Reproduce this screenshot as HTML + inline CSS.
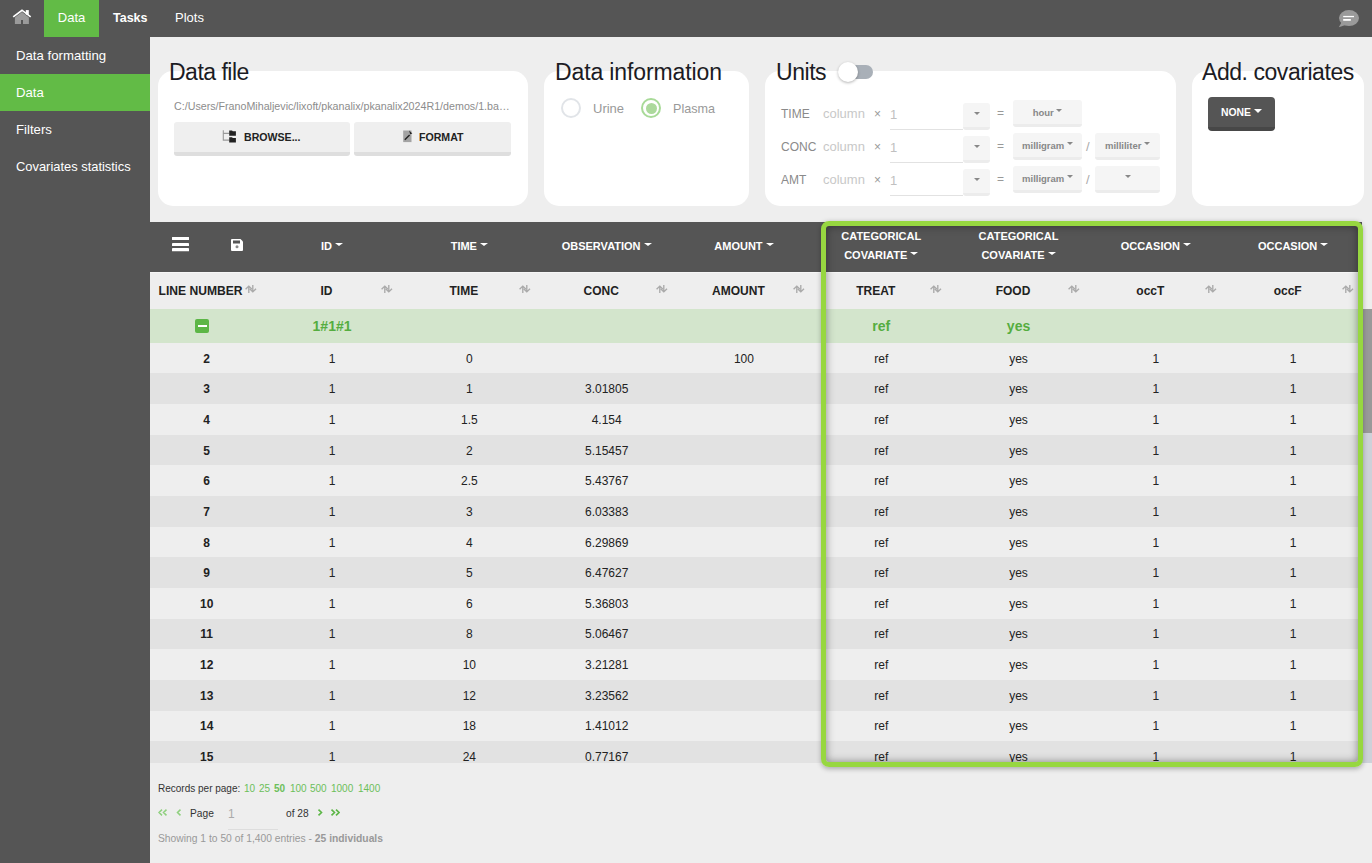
<!DOCTYPE html>
<html><head><meta charset="utf-8"><style>
*{box-sizing:border-box;margin:0;padding:0}
html,body{width:1372px;height:863px;overflow:hidden;background:#eee;font-family:"Liberation Sans",sans-serif}
.a{position:absolute;white-space:nowrap}
#top{position:absolute;left:0;top:0;width:1372px;height:37px;background:#555555}
#side{position:absolute;left:0;top:37px;width:150px;height:826px;background:#555555}
.nav{position:absolute;top:0;height:37px;line-height:36px;color:#fff;font-size:13px;white-space:nowrap}
.sitem{position:absolute;left:0;width:150px;height:37px;line-height:37px;padding-left:16px;color:#fff;font-size:13.2px;white-space:nowrap}
.card{position:absolute;top:71px;height:135px;background:#fff;border-radius:15px}
.ttl{position:absolute;top:58px;font-size:23px;line-height:28px;color:#1c1c24;white-space:nowrap}
.btn{position:absolute;background:#efefef;border-bottom:4px solid #dedede;border-radius:3px;font-weight:bold;color:#222;text-align:center;white-space:nowrap}
.caret{display:inline-block;width:0;height:0;vertical-align:middle;position:relative;top:-2.5px}
.lbl{position:absolute;font-size:12.5px;color:#999;white-space:nowrap}
.ubtn{position:absolute;background:#f5f5f5;border-bottom:3px solid #ececec;border-radius:3px;font-weight:bold;font-size:9.5px;color:#888;text-align:center;white-space:nowrap}
#tbl{position:absolute;left:150px;top:222px;width:1212px;height:541px;overflow:hidden;background:#eee}
.hc{position:absolute;top:0;height:50px;color:#fff;font-weight:bold;font-size:11px;text-align:center;display:flex;flex-direction:column;align-items:center;justify-content:center;white-space:nowrap;line-height:18.5px;padding-bottom:3px}
.sc{position:absolute;top:50px;height:37px;color:#222;font-weight:bold;font-size:12px;display:flex;align-items:center;justify-content:center;white-space:nowrap;padding-right:11px}
.row{position:absolute;left:0;width:1212px}
.c{position:absolute;top:0;height:100%;padding-top:1px;font-size:12px;color:#222;display:flex;align-items:center;justify-content:center;white-space:nowrap}
.sort{position:absolute;top:62.5px;width:12px;height:8px}
</style></head><body>
<div id="top">
<svg class="a" style="left:12px;top:8px" width="20" height="18" viewBox="0 0 20 18">
<path d="M2.9 9.6 L10 3.9 L16.9 9.6 V16 H11 V12 H9 V16 H2.9 Z" fill="#9a9a9a"/>
<rect x="13.8" y="2.1" width="3" height="4.6" fill="#fff"/>
<path d="M1.2 8.9 L10 2.2 L18.7 8.9" stroke="#fff" stroke-width="1.7" fill="none"/>
</svg>
<div class="nav" style="left:44px;width:55px;background:#62bb46;text-align:center;font-size:13px">Data</div>
<div class="nav" style="left:113px;font-weight:bold;font-size:12.5px">Tasks</div>
<div class="nav" style="left:175px;font-size:13px">Plots</div>
<svg class="a" style="left:1338px;top:9px" width="22" height="19" viewBox="0 0 22 19">
<ellipse cx="11" cy="9.1" rx="10" ry="8" fill="#9a9a9a"/>
<path d="M3.5 13.5 L0.8 18.2 L7.5 16 Z" fill="#9a9a9a"/>
<rect x="5.2" y="6.9" width="10.8" height="1.3" fill="#fff"/>
<rect x="5.2" y="10" width="7.6" height="1.8" fill="#fff"/>
</svg>
</div>
<div id="side">
<div class="sitem" style="top:0">Data formatting</div>
<div class="sitem" style="top:37px;background:#62bb46">Data</div>
<div class="sitem" style="top:74px">Filters</div>
<div class="sitem" style="top:111px;font-size:12.9px">Covariates statistics</div>
</div>
<div class="card" style="left:158px;width:370px"></div>
<div class="card" style="left:544px;width:205px"></div>
<div class="card" style="left:765px;width:411px"></div>
<div class="card" style="left:1192px;width:172px"></div>
<div class="ttl" style="left:169px;letter-spacing:-0.5px">Data file</div>
<div class="ttl" style="left:555px;letter-spacing:-0.12px">Data information</div>
<div class="ttl" style="left:776px;letter-spacing:-0.45px">Units</div>
<div class="ttl" style="left:1202px;letter-spacing:-0.45px">Add. covariates</div>
<div class="a" style="left:174px;top:98.5px;font-size:10.7px;color:#8c8c8c;line-height:14px">C:/Users/FranoMihaljevic/lixoft/pkanalix/pkanalix2024R1/demos/1.ba…</div>
<div class="btn" style="left:174px;top:122px;width:176px;height:34px;font-size:10.6px;line-height:30px">
<svg style="position:absolute;left:48px;top:8px" width="15" height="14" viewBox="0 0 15 14">
<path d="M1.3 0.2 V10.1 H7.2 M1.3 3.4 H7.2" stroke="#999" stroke-width="1.1" fill="none"/>
<path d="M7.2 0.4 H10 L10.8 1.2 H13.9 V5.7 H7.2 Z" fill="#222"/><path d="M7.2 7.2 H10 L10.8 8 H13.9 V12.4 H7.2 Z" fill="#222"/>
</svg><span style="position:absolute;left:70px;top:0">BROWSE...</span></div>
<div class="btn" style="left:354px;top:122px;width:157px;height:34px;font-size:10.6px;line-height:30px">
<svg style="position:absolute;left:48.5px;top:7.8px" width="11" height="13" viewBox="0 0 11 13">
<rect x="0.2" y="0.5" width="8.3" height="11.6" fill="#a3a3a3"/><path d="M1.8 9.8 L6.6 5" stroke="#222" stroke-width="1.4"/><path d="M6 0.6 L9.3 3.5 L7.2 4.3 Z" fill="#222"/>
</svg><span style="position:absolute;left:65px;top:0">FORMAT</span></div>
<div class="a" style="left:561px;top:98px;width:20px;height:20px;border:2px solid #e1e4e8;border-radius:50%"></div>
<div class="a" style="left:593px;top:100.5px;font-size:13px;color:#999;line-height:16px">Urine</div>
<div class="a" style="left:641px;top:98px;width:20px;height:20px;border:2px solid #a8da98;border-radius:50%;background:#fff"></div>
<div class="a" style="left:645.5px;top:102.5px;width:11px;height:11px;border-radius:50%;background:#acd99c"></div>
<div class="a" style="left:673px;top:100.5px;font-size:12.6px;color:#999;line-height:16px">Plasma</div>
<div class="a" style="left:847px;top:65px;width:26px;height:14px;border-radius:7px;background:#a9b0b8"></div>
<div class="a" style="left:838px;top:62px;width:20px;height:20px;border-radius:50%;background:#fff;box-shadow:0 1px 3px rgba(0,0,0,.3)"></div>
<div class="a" style="left:781px;top:105.5px;font-size:12px;color:#8a8a8a;line-height:16px">TIME</div>
<div class="a" style="left:823px;top:105.5px;font-size:13px;color:#c8c8c8;line-height:16px">column</div>
<div class="a" style="left:874px;top:105.5px;font-size:12px;color:#9a9a9a;line-height:16px">×</div>
<div class="a" style="left:890px;top:107px;font-size:13px;color:#c0c0c0;line-height:16px">1</div>
<div class="a" style="left:890px;top:129px;width:73px;height:1px;background:#e2e2e2"></div>
<div class="ubtn" style="left:963px;top:103px;width:27px;height:27px;line-height:26px"><span class="caret" style="border-left:3.5px solid transparent;border-right:3.5px solid transparent;border-top:3.5px solid #888"></span></div>
<div class="a" style="left:997px;top:105px;font-size:12px;color:#999;line-height:16px">=</div>
<div class="ubtn" style="left:1013px;top:100px;width:69px;height:27px;line-height:25px">hour <span class="caret" style="border-left:3.5px solid transparent;border-right:3.5px solid transparent;border-top:3.5px solid #888"></span></div>
<div class="a" style="left:781px;top:138.5px;font-size:12px;color:#8a8a8a;line-height:16px">CONC</div>
<div class="a" style="left:823px;top:138.5px;font-size:13px;color:#c8c8c8;line-height:16px">column</div>
<div class="a" style="left:874px;top:138.5px;font-size:12px;color:#9a9a9a;line-height:16px">×</div>
<div class="a" style="left:890px;top:140px;font-size:13px;color:#c0c0c0;line-height:16px">1</div>
<div class="a" style="left:890px;top:162px;width:73px;height:1px;background:#e2e2e2"></div>
<div class="ubtn" style="left:963px;top:136px;width:27px;height:27px;line-height:26px"><span class="caret" style="border-left:3.5px solid transparent;border-right:3.5px solid transparent;border-top:3.5px solid #888"></span></div>
<div class="a" style="left:997px;top:138px;font-size:12px;color:#999;line-height:16px">=</div>
<div class="ubtn" style="left:1013px;top:133px;width:69px;height:27px;line-height:25px">milligram <span class="caret" style="border-left:3.5px solid transparent;border-right:3.5px solid transparent;border-top:3.5px solid #888"></span></div>
<div class="a" style="left:1086px;top:139px;font-size:13px;color:#aaa;line-height:16px">/</div>
<div class="ubtn" style="left:1095px;top:133px;width:65px;height:27px;line-height:25px">milliliter <span class="caret" style="border-left:3.5px solid transparent;border-right:3.5px solid transparent;border-top:3.5px solid #888"></span></div>
<div class="a" style="left:781px;top:171.5px;font-size:12px;color:#8a8a8a;line-height:16px">AMT</div>
<div class="a" style="left:823px;top:171.5px;font-size:13px;color:#c8c8c8;line-height:16px">column</div>
<div class="a" style="left:874px;top:171.5px;font-size:12px;color:#9a9a9a;line-height:16px">×</div>
<div class="a" style="left:890px;top:173px;font-size:13px;color:#c0c0c0;line-height:16px">1</div>
<div class="a" style="left:890px;top:195px;width:73px;height:1px;background:#e2e2e2"></div>
<div class="ubtn" style="left:963px;top:169px;width:27px;height:27px;line-height:26px"><span class="caret" style="border-left:3.5px solid transparent;border-right:3.5px solid transparent;border-top:3.5px solid #888"></span></div>
<div class="a" style="left:997px;top:171px;font-size:12px;color:#999;line-height:16px">=</div>
<div class="ubtn" style="left:1013px;top:166px;width:69px;height:27px;line-height:25px">milligram <span class="caret" style="border-left:3.5px solid transparent;border-right:3.5px solid transparent;border-top:3.5px solid #888"></span></div>
<div class="a" style="left:1086px;top:172px;font-size:13px;color:#aaa;line-height:16px">/</div>
<div class="ubtn" style="left:1095px;top:166px;width:65px;height:27px;line-height:25px"> <span class="caret" style="border-left:3.5px solid transparent;border-right:3.5px solid transparent;border-top:3.5px solid #888"></span></div>
<div class="a" style="left:1208px;top:97px;width:67px;height:34px;background:#555;border-bottom:4px solid #474747;border-radius:4px;color:#fff;font-weight:bold;font-size:10.4px;line-height:31px;text-align:center">NONE <span class="caret" style="border-left:4.0px solid transparent;border-right:4.0px solid transparent;border-top:4px solid #fff"></span></div>
<div id="tbl">
<div class="a" style="left:0;top:0;width:1212px;height:50px;background:#555555"></div>
<div class="a" style="left:0;top:50px;width:1212px;height:1px;background:#f6f6f6"></div>
<svg class="a" style="left:22px;top:14px" width="17" height="16" viewBox="0 0 17 16">
<rect x="0" y="0.9" width="17" height="3.2" rx="0.4" fill="#fff"/><rect x="0" y="7.0" width="17" height="3.1" rx="0.4" fill="#fff"/><rect x="0" y="12.1" width="17" height="3.2" rx="0.4" fill="#fff"/>
</svg>
<svg class="a" style="left:81px;top:17px" width="12" height="12" viewBox="0 0 12 12">
<path d="M0 1 Q0 0 1 0 H9.5 L12 2.5 V11 Q12 12 11 12 H1 Q0 12 0 11 Z" fill="#fff"/>
<rect x="2" y="1.5" width="7" height="3" fill="#555"/><circle cx="6" cy="7.8" r="1.5" fill="#888"/>
</svg>
<div class="hc" style="left:113.40px;width:137.30px;padding-bottom:1.5px"><div>ID <span class="caret" style="border-left:4.0px solid transparent;border-right:4.0px solid transparent;border-top:3.5px solid #fff"></span></div></div>
<div class="hc" style="left:250.70px;width:137.30px;padding-bottom:1.5px"><div>TIME <span class="caret" style="border-left:4.0px solid transparent;border-right:4.0px solid transparent;border-top:3.5px solid #fff"></span></div></div>
<div class="hc" style="left:388.00px;width:137.30px;padding-bottom:1.5px"><div>OBSERVATION <span class="caret" style="border-left:4.0px solid transparent;border-right:4.0px solid transparent;border-top:3.5px solid #fff"></span></div></div>
<div class="hc" style="left:525.30px;width:137.30px;padding-bottom:1.5px"><div>AMOUNT <span class="caret" style="border-left:4.0px solid transparent;border-right:4.0px solid transparent;border-top:3.5px solid #fff"></span></div></div>
<div class="hc" style="left:662.60px;width:137.30px"><div>CATEGORICAL</div><div>COVARIATE <span class="caret" style="border-left:4.0px solid transparent;border-right:4.0px solid transparent;border-top:3.5px solid #fff"></span></div></div>
<div class="hc" style="left:799.90px;width:137.30px"><div>CATEGORICAL</div><div>COVARIATE <span class="caret" style="border-left:4.0px solid transparent;border-right:4.0px solid transparent;border-top:3.5px solid #fff"></span></div></div>
<div class="hc" style="left:937.20px;width:137.30px;padding-bottom:1.5px"><div>OCCASION <span class="caret" style="border-left:4.0px solid transparent;border-right:4.0px solid transparent;border-top:3.5px solid #fff"></span></div></div>
<div class="hc" style="left:1074.50px;width:137.30px;padding-bottom:1.5px"><div>OCCASION <span class="caret" style="border-left:4.0px solid transparent;border-right:4.0px solid transparent;border-top:3.5px solid #fff"></span></div></div>
<div class="a" style="left:8.5px;top:61px;font-weight:bold;font-size:12.1px;color:#222;line-height:16px">LINE NUMBER</div>
<svg class="sort" style="left:94.50px" width="12" height="8" viewBox="0 0 12 8"><path d="M3.8 8 V1.2 M0.6 4.3 L3.8 1.1 L7 4.3" stroke="#aaa" stroke-width="1.35" fill="none"/><path d="M7.8 0 V6.8 M4.6 3.7 L7.8 6.9 L11 3.7" stroke="#aaa" stroke-width="1.35" fill="none"/></svg>
<div class="sc" style="left:113.40px;width:137.30px">ID</div>
<svg class="sort" style="left:231.20px" width="12" height="8" viewBox="0 0 12 8"><path d="M3.8 8 V1.2 M0.6 4.3 L3.8 1.1 L7 4.3" stroke="#aaa" stroke-width="1.35" fill="none"/><path d="M7.8 0 V6.8 M4.6 3.7 L7.8 6.9 L11 3.7" stroke="#aaa" stroke-width="1.35" fill="none"/></svg>
<div class="sc" style="left:250.70px;width:137.30px">TIME</div>
<svg class="sort" style="left:368.50px" width="12" height="8" viewBox="0 0 12 8"><path d="M3.8 8 V1.2 M0.6 4.3 L3.8 1.1 L7 4.3" stroke="#aaa" stroke-width="1.35" fill="none"/><path d="M7.8 0 V6.8 M4.6 3.7 L7.8 6.9 L11 3.7" stroke="#aaa" stroke-width="1.35" fill="none"/></svg>
<div class="sc" style="left:388.00px;width:137.30px">CONC</div>
<svg class="sort" style="left:505.80px" width="12" height="8" viewBox="0 0 12 8"><path d="M3.8 8 V1.2 M0.6 4.3 L3.8 1.1 L7 4.3" stroke="#aaa" stroke-width="1.35" fill="none"/><path d="M7.8 0 V6.8 M4.6 3.7 L7.8 6.9 L11 3.7" stroke="#aaa" stroke-width="1.35" fill="none"/></svg>
<div class="sc" style="left:525.30px;width:137.30px">AMOUNT</div>
<svg class="sort" style="left:643.10px" width="12" height="8" viewBox="0 0 12 8"><path d="M3.8 8 V1.2 M0.6 4.3 L3.8 1.1 L7 4.3" stroke="#aaa" stroke-width="1.35" fill="none"/><path d="M7.8 0 V6.8 M4.6 3.7 L7.8 6.9 L11 3.7" stroke="#aaa" stroke-width="1.35" fill="none"/></svg>
<div class="sc" style="left:662.60px;width:137.30px">TREAT</div>
<svg class="sort" style="left:780.40px" width="12" height="8" viewBox="0 0 12 8"><path d="M3.8 8 V1.2 M0.6 4.3 L3.8 1.1 L7 4.3" stroke="#aaa" stroke-width="1.35" fill="none"/><path d="M7.8 0 V6.8 M4.6 3.7 L7.8 6.9 L11 3.7" stroke="#aaa" stroke-width="1.35" fill="none"/></svg>
<div class="sc" style="left:799.90px;width:137.30px">FOOD</div>
<svg class="sort" style="left:917.70px" width="12" height="8" viewBox="0 0 12 8"><path d="M3.8 8 V1.2 M0.6 4.3 L3.8 1.1 L7 4.3" stroke="#aaa" stroke-width="1.35" fill="none"/><path d="M7.8 0 V6.8 M4.6 3.7 L7.8 6.9 L11 3.7" stroke="#aaa" stroke-width="1.35" fill="none"/></svg>
<div class="sc" style="left:937.20px;width:137.30px">occT</div>
<svg class="sort" style="left:1055.00px" width="12" height="8" viewBox="0 0 12 8"><path d="M3.8 8 V1.2 M0.6 4.3 L3.8 1.1 L7 4.3" stroke="#aaa" stroke-width="1.35" fill="none"/><path d="M7.8 0 V6.8 M4.6 3.7 L7.8 6.9 L11 3.7" stroke="#aaa" stroke-width="1.35" fill="none"/></svg>
<div class="sc" style="left:1074.50px;width:137.30px">occF</div>
<svg class="sort" style="left:1192.30px" width="12" height="8" viewBox="0 0 12 8"><path d="M3.8 8 V1.2 M0.6 4.3 L3.8 1.1 L7 4.3" stroke="#aaa" stroke-width="1.35" fill="none"/><path d="M7.8 0 V6.8 M4.6 3.7 L7.8 6.9 L11 3.7" stroke="#aaa" stroke-width="1.35" fill="none"/></svg>
<div class="row" style="top:87px;height:33.8px;background:#d3e5cc">
<div class="a" style="left:45px;top:10px;width:14px;height:14px;background:#5cb646;border-radius:2px"><div class="a" style="left:2.5px;top:5.8px;width:9px;height:2.4px;background:#fff"></div></div>
<div class="c" style="left:113.40px;width:137.30px;color:#55ad40;font-weight:bold;font-size:14px">1#1#1</div>
<div class="c" style="left:662.60px;width:137.30px;color:#55ad40;font-weight:bold;font-size:14px">ref</div>
<div class="c" style="left:799.90px;width:137.30px;color:#55ad40;font-weight:bold;font-size:14px">yes</div>
</div>
<div class="row" style="top:120.80px;height:30.65px;background:#eeeeee">
<div class="c" style="left:0.00px;width:113.40px;font-weight:bold;">2</div>
<div class="c" style="left:113.40px;width:137.30px;">1</div>
<div class="c" style="left:250.70px;width:137.30px;">0</div>
<div class="c" style="left:525.30px;width:137.30px;">100</div>
<div class="c" style="left:662.60px;width:137.30px;">ref</div>
<div class="c" style="left:799.90px;width:137.30px;">yes</div>
<div class="c" style="left:937.20px;width:137.30px;">1</div>
<div class="c" style="left:1074.50px;width:137.30px;">1</div>
</div>
<div class="row" style="top:151.45px;height:30.65px;background:#e2e2e2">
<div class="c" style="left:0.00px;width:113.40px;font-weight:bold;">3</div>
<div class="c" style="left:113.40px;width:137.30px;">1</div>
<div class="c" style="left:250.70px;width:137.30px;">1</div>
<div class="c" style="left:388.00px;width:137.30px;">3.01805</div>
<div class="c" style="left:662.60px;width:137.30px;">ref</div>
<div class="c" style="left:799.90px;width:137.30px;">yes</div>
<div class="c" style="left:937.20px;width:137.30px;">1</div>
<div class="c" style="left:1074.50px;width:137.30px;">1</div>
</div>
<div class="row" style="top:182.10px;height:30.65px;background:#eeeeee">
<div class="c" style="left:0.00px;width:113.40px;font-weight:bold;">4</div>
<div class="c" style="left:113.40px;width:137.30px;">1</div>
<div class="c" style="left:250.70px;width:137.30px;">1.5</div>
<div class="c" style="left:388.00px;width:137.30px;">4.154</div>
<div class="c" style="left:662.60px;width:137.30px;">ref</div>
<div class="c" style="left:799.90px;width:137.30px;">yes</div>
<div class="c" style="left:937.20px;width:137.30px;">1</div>
<div class="c" style="left:1074.50px;width:137.30px;">1</div>
</div>
<div class="row" style="top:212.75px;height:30.65px;background:#e2e2e2">
<div class="c" style="left:0.00px;width:113.40px;font-weight:bold;">5</div>
<div class="c" style="left:113.40px;width:137.30px;">1</div>
<div class="c" style="left:250.70px;width:137.30px;">2</div>
<div class="c" style="left:388.00px;width:137.30px;">5.15457</div>
<div class="c" style="left:662.60px;width:137.30px;">ref</div>
<div class="c" style="left:799.90px;width:137.30px;">yes</div>
<div class="c" style="left:937.20px;width:137.30px;">1</div>
<div class="c" style="left:1074.50px;width:137.30px;">1</div>
</div>
<div class="row" style="top:243.40px;height:30.65px;background:#eeeeee">
<div class="c" style="left:0.00px;width:113.40px;font-weight:bold;">6</div>
<div class="c" style="left:113.40px;width:137.30px;">1</div>
<div class="c" style="left:250.70px;width:137.30px;">2.5</div>
<div class="c" style="left:388.00px;width:137.30px;">5.43767</div>
<div class="c" style="left:662.60px;width:137.30px;">ref</div>
<div class="c" style="left:799.90px;width:137.30px;">yes</div>
<div class="c" style="left:937.20px;width:137.30px;">1</div>
<div class="c" style="left:1074.50px;width:137.30px;">1</div>
</div>
<div class="row" style="top:274.05px;height:30.65px;background:#e2e2e2">
<div class="c" style="left:0.00px;width:113.40px;font-weight:bold;">7</div>
<div class="c" style="left:113.40px;width:137.30px;">1</div>
<div class="c" style="left:250.70px;width:137.30px;">3</div>
<div class="c" style="left:388.00px;width:137.30px;">6.03383</div>
<div class="c" style="left:662.60px;width:137.30px;">ref</div>
<div class="c" style="left:799.90px;width:137.30px;">yes</div>
<div class="c" style="left:937.20px;width:137.30px;">1</div>
<div class="c" style="left:1074.50px;width:137.30px;">1</div>
</div>
<div class="row" style="top:304.70px;height:30.65px;background:#eeeeee">
<div class="c" style="left:0.00px;width:113.40px;font-weight:bold;">8</div>
<div class="c" style="left:113.40px;width:137.30px;">1</div>
<div class="c" style="left:250.70px;width:137.30px;">4</div>
<div class="c" style="left:388.00px;width:137.30px;">6.29869</div>
<div class="c" style="left:662.60px;width:137.30px;">ref</div>
<div class="c" style="left:799.90px;width:137.30px;">yes</div>
<div class="c" style="left:937.20px;width:137.30px;">1</div>
<div class="c" style="left:1074.50px;width:137.30px;">1</div>
</div>
<div class="row" style="top:335.35px;height:30.65px;background:#e2e2e2">
<div class="c" style="left:0.00px;width:113.40px;font-weight:bold;">9</div>
<div class="c" style="left:113.40px;width:137.30px;">1</div>
<div class="c" style="left:250.70px;width:137.30px;">5</div>
<div class="c" style="left:388.00px;width:137.30px;">6.47627</div>
<div class="c" style="left:662.60px;width:137.30px;">ref</div>
<div class="c" style="left:799.90px;width:137.30px;">yes</div>
<div class="c" style="left:937.20px;width:137.30px;">1</div>
<div class="c" style="left:1074.50px;width:137.30px;">1</div>
</div>
<div class="row" style="top:366.00px;height:30.65px;background:#eeeeee">
<div class="c" style="left:0.00px;width:113.40px;font-weight:bold;">10</div>
<div class="c" style="left:113.40px;width:137.30px;">1</div>
<div class="c" style="left:250.70px;width:137.30px;">6</div>
<div class="c" style="left:388.00px;width:137.30px;">5.36803</div>
<div class="c" style="left:662.60px;width:137.30px;">ref</div>
<div class="c" style="left:799.90px;width:137.30px;">yes</div>
<div class="c" style="left:937.20px;width:137.30px;">1</div>
<div class="c" style="left:1074.50px;width:137.30px;">1</div>
</div>
<div class="row" style="top:396.65px;height:30.65px;background:#e2e2e2">
<div class="c" style="left:0.00px;width:113.40px;font-weight:bold;">11</div>
<div class="c" style="left:113.40px;width:137.30px;">1</div>
<div class="c" style="left:250.70px;width:137.30px;">8</div>
<div class="c" style="left:388.00px;width:137.30px;">5.06467</div>
<div class="c" style="left:662.60px;width:137.30px;">ref</div>
<div class="c" style="left:799.90px;width:137.30px;">yes</div>
<div class="c" style="left:937.20px;width:137.30px;">1</div>
<div class="c" style="left:1074.50px;width:137.30px;">1</div>
</div>
<div class="row" style="top:427.30px;height:30.65px;background:#eeeeee">
<div class="c" style="left:0.00px;width:113.40px;font-weight:bold;">12</div>
<div class="c" style="left:113.40px;width:137.30px;">1</div>
<div class="c" style="left:250.70px;width:137.30px;">10</div>
<div class="c" style="left:388.00px;width:137.30px;">3.21281</div>
<div class="c" style="left:662.60px;width:137.30px;">ref</div>
<div class="c" style="left:799.90px;width:137.30px;">yes</div>
<div class="c" style="left:937.20px;width:137.30px;">1</div>
<div class="c" style="left:1074.50px;width:137.30px;">1</div>
</div>
<div class="row" style="top:457.95px;height:30.65px;background:#e2e2e2">
<div class="c" style="left:0.00px;width:113.40px;font-weight:bold;">13</div>
<div class="c" style="left:113.40px;width:137.30px;">1</div>
<div class="c" style="left:250.70px;width:137.30px;">12</div>
<div class="c" style="left:388.00px;width:137.30px;">3.23562</div>
<div class="c" style="left:662.60px;width:137.30px;">ref</div>
<div class="c" style="left:799.90px;width:137.30px;">yes</div>
<div class="c" style="left:937.20px;width:137.30px;">1</div>
<div class="c" style="left:1074.50px;width:137.30px;">1</div>
</div>
<div class="row" style="top:488.60px;height:30.65px;background:#eeeeee">
<div class="c" style="left:0.00px;width:113.40px;font-weight:bold;">14</div>
<div class="c" style="left:113.40px;width:137.30px;">1</div>
<div class="c" style="left:250.70px;width:137.30px;">18</div>
<div class="c" style="left:388.00px;width:137.30px;">1.41012</div>
<div class="c" style="left:662.60px;width:137.30px;">ref</div>
<div class="c" style="left:799.90px;width:137.30px;">yes</div>
<div class="c" style="left:937.20px;width:137.30px;">1</div>
<div class="c" style="left:1074.50px;width:137.30px;">1</div>
</div>
<div class="row" style="top:519.25px;height:30.65px;background:#e2e2e2">
<div class="c" style="left:0.00px;width:113.40px;font-weight:bold;">15</div>
<div class="c" style="left:113.40px;width:137.30px;">1</div>
<div class="c" style="left:250.70px;width:137.30px;">24</div>
<div class="c" style="left:388.00px;width:137.30px;">0.77167</div>
<div class="c" style="left:662.60px;width:137.30px;">ref</div>
<div class="c" style="left:799.90px;width:137.30px;">yes</div>
<div class="c" style="left:937.20px;width:137.30px;">1</div>
<div class="c" style="left:1074.50px;width:137.30px;">1</div>
</div>
</div>
<div class="a" style="left:1362px;top:309px;width:10px;height:454px;background:#cdd1d9"></div>
<div class="a" style="left:1362px;top:309px;width:10px;height:124px;background:#999"></div>
<div class="a" style="left:821px;top:221px;width:541.8px;height:545.7px;border:5px solid #97d740;border-radius:8px;box-shadow:0 1.5px 5px rgba(0,0,0,.28), inset 0 0 9px rgba(0,0,0,.42)"></div>
<div class="a" style="left:158px;top:781.5px;font-size:10px;color:#333;line-height:14px">Records per page:</div>
<div class="a" style="left:244px;top:781.5px;font-size:10px;color:#6cbf5a;line-height:14px">10</div>
<div class="a" style="left:259px;top:781.5px;font-size:10px;color:#6cbf5a;line-height:14px">25</div>
<div class="a" style="left:274px;top:781.5px;font-size:10px;color:#6cbf5a;line-height:14px"><b>50</b></div>
<div class="a" style="left:290px;top:781.5px;font-size:10px;color:#6cbf5a;line-height:14px">100</div>
<div class="a" style="left:310px;top:781.5px;font-size:10px;color:#6cbf5a;line-height:14px">500</div>
<div class="a" style="left:331px;top:781.5px;font-size:10px;color:#6cbf5a;line-height:14px">1000</div>
<div class="a" style="left:358px;top:781.5px;font-size:10px;color:#6cbf5a;line-height:14px">1400</div>
<svg class="a" style="left:158px;top:809px" width="10" height="7" viewBox="0 0 10 7"><path d="M4 0.6 L1 3.5 L4 6.4 M8.5 0.6 L5.5 3.5 L8.5 6.4" stroke="#8fd07e" stroke-width="1.5" fill="none"/></svg>
<svg class="a" style="left:176px;top:809px" width="6" height="7" viewBox="0 0 6 7"><path d="M4.5 0.6 L1.5 3.5 L4.5 6.4" stroke="#8fd07e" stroke-width="1.5" fill="none"/></svg>
<svg class="a" style="left:316.5px;top:809px" width="6" height="7" viewBox="0 0 6 7"><path d="M1.5 0.6 L4.5 3.5 L1.5 6.4" stroke="#5cb646" stroke-width="1.6" fill="none"/></svg>
<svg class="a" style="left:330px;top:809px" width="10" height="7" viewBox="0 0 10 7"><path d="M1.5 0.6 L4.5 3.5 L1.5 6.4 M6 0.6 L9 3.5 L6 6.4" stroke="#5cb646" stroke-width="1.6" fill="none"/></svg>
<div class="a" style="left:190px;top:806.8px;font-size:10.2px;color:#333;line-height:14px">Page</div>
<div class="a" style="left:228px;top:806px;font-size:12px;color:#aaa;line-height:16px">1</div>
<div class="a" style="left:228px;top:829px;width:50px;height:1px;background:#ddd"></div>
<div class="a" style="left:286px;top:806.8px;font-size:10.2px;color:#333;line-height:14px">of 28</div>
<div class="a" style="left:158px;top:832px;font-size:10.3px;color:#999;line-height:14px">Showing 1 to 50 of 1,400 entries - <b>25 individuals</b></div>
</body></html>
